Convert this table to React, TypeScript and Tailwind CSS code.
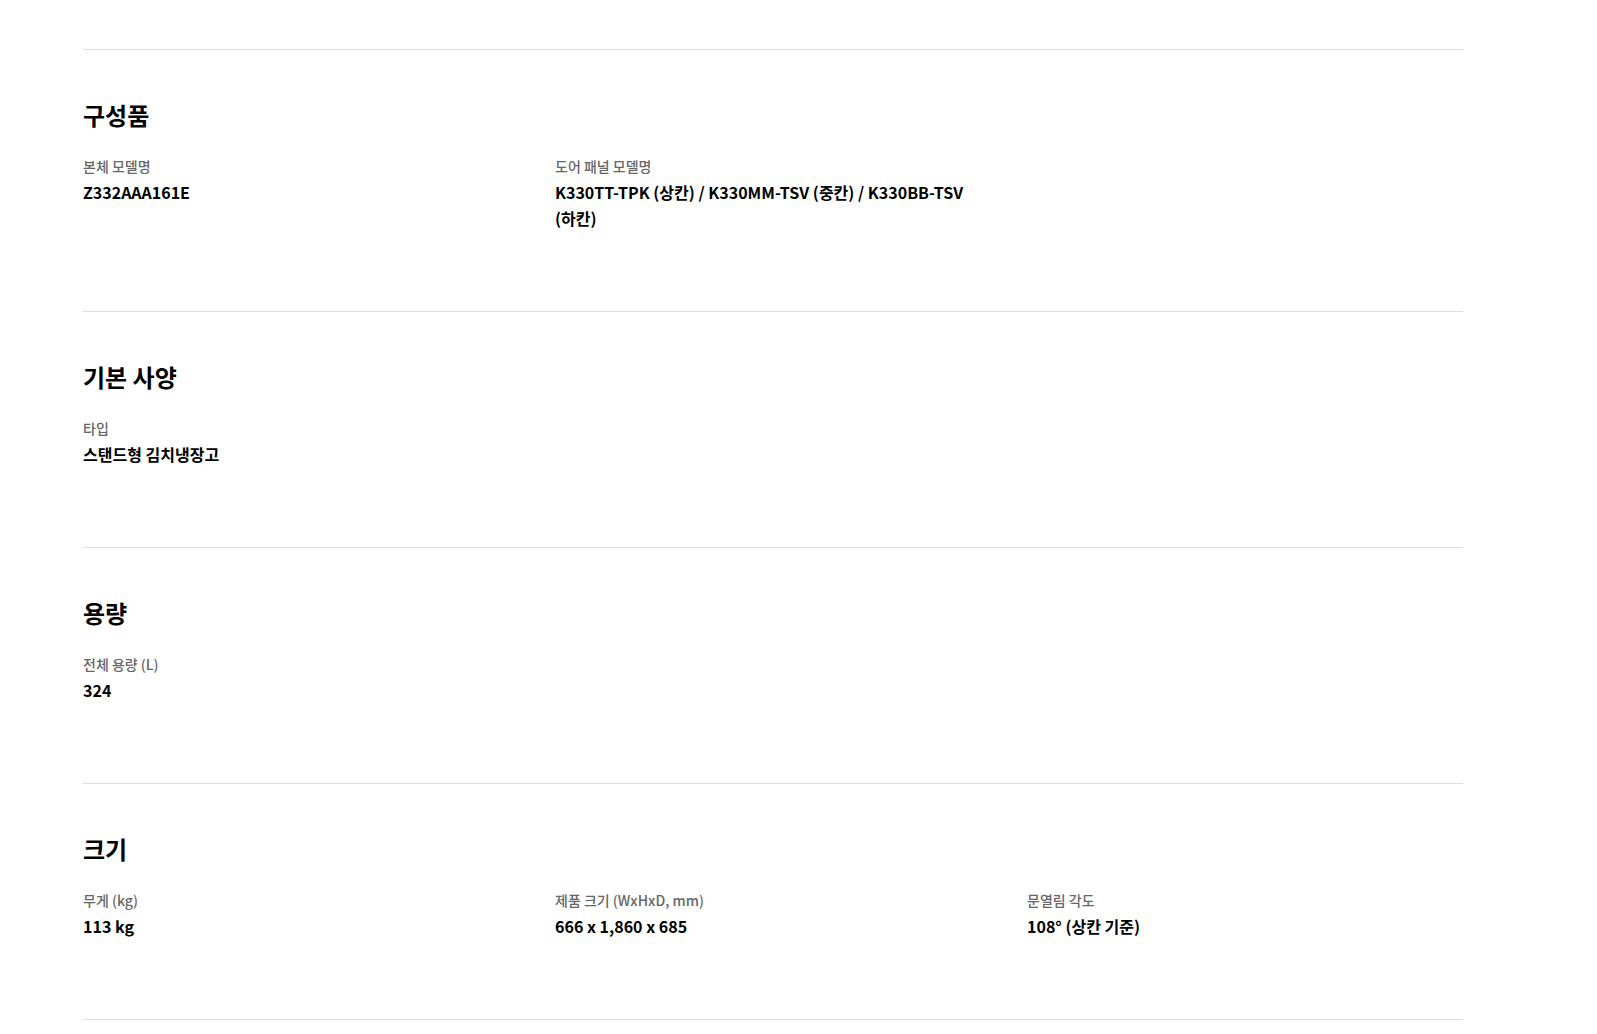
const sections: { title: string; items: { label: string; value: string }[] }[] = [
  {
    title: "구성품",
    items: [
      { label: "본체 모델명", value: "Z332AAA161E" },
      {
        label: "도어 패널 모델명",
        value: "K330TT-TPK (상칸) / K330MM-TSV (중칸) / K330BB-TSV (하칸)",
      },
    ],
  },
  {
    title: "기본 사양",
    items: [{ label: "타입", value: "스탠드형 김치냉장고" }],
  },
  {
    title: "용량",
    items: [{ label: "전체 용량 (L)", value: "324" }],
  },
  {
    title: "크기",
    items: [
      { label: "무게 (kg)", value: "113 kg" },
      { label: "제품 크기 (WxHxD, mm)", value: "666 x 1,860 x 685" },
      { label: "문열림 각도", value: "108° (상칸 기준)" },
    ],
  },
];

function SpecSection({
  title,
  items,
}: {
  title: string;
  items: { label: string; value: string }[];
}) {
  return (
    <section className="border-t border-[#dddddd] pt-[49px] pb-[80px]">
      <h2 className="text-[24px] leading-[32px] font-bold text-black">{title}</h2>
      <div className="mt-[25px] grid grid-cols-3 gap-x-[36px]">
        {items.map((item) => (
          <div key={item.label} className="flex flex-col">
            <p className="text-[14px] leading-[20px] font-medium text-[#666666]">
              {item.label}
            </p>
            <p className="mt-[3px] text-[16px] leading-[26px] font-bold text-black break-keep">
              {item.value}
            </p>
          </div>
        ))}
      </div>
    </section>
  );
}

export default function App() {
  return (
    <div
      className="min-h-screen bg-white pt-[49px]"
      style={{ fontFamily: '"Noto Sans CJK KR", "Noto Sans", sans-serif' }}
    >
      <div className="ml-[83px] w-[1380px] border-b border-[#dddddd]">
        {sections.map((s) => (
          <SpecSection key={s.title} title={s.title} items={s.items} />
        ))}
      </div>
    </div>
  );
}
